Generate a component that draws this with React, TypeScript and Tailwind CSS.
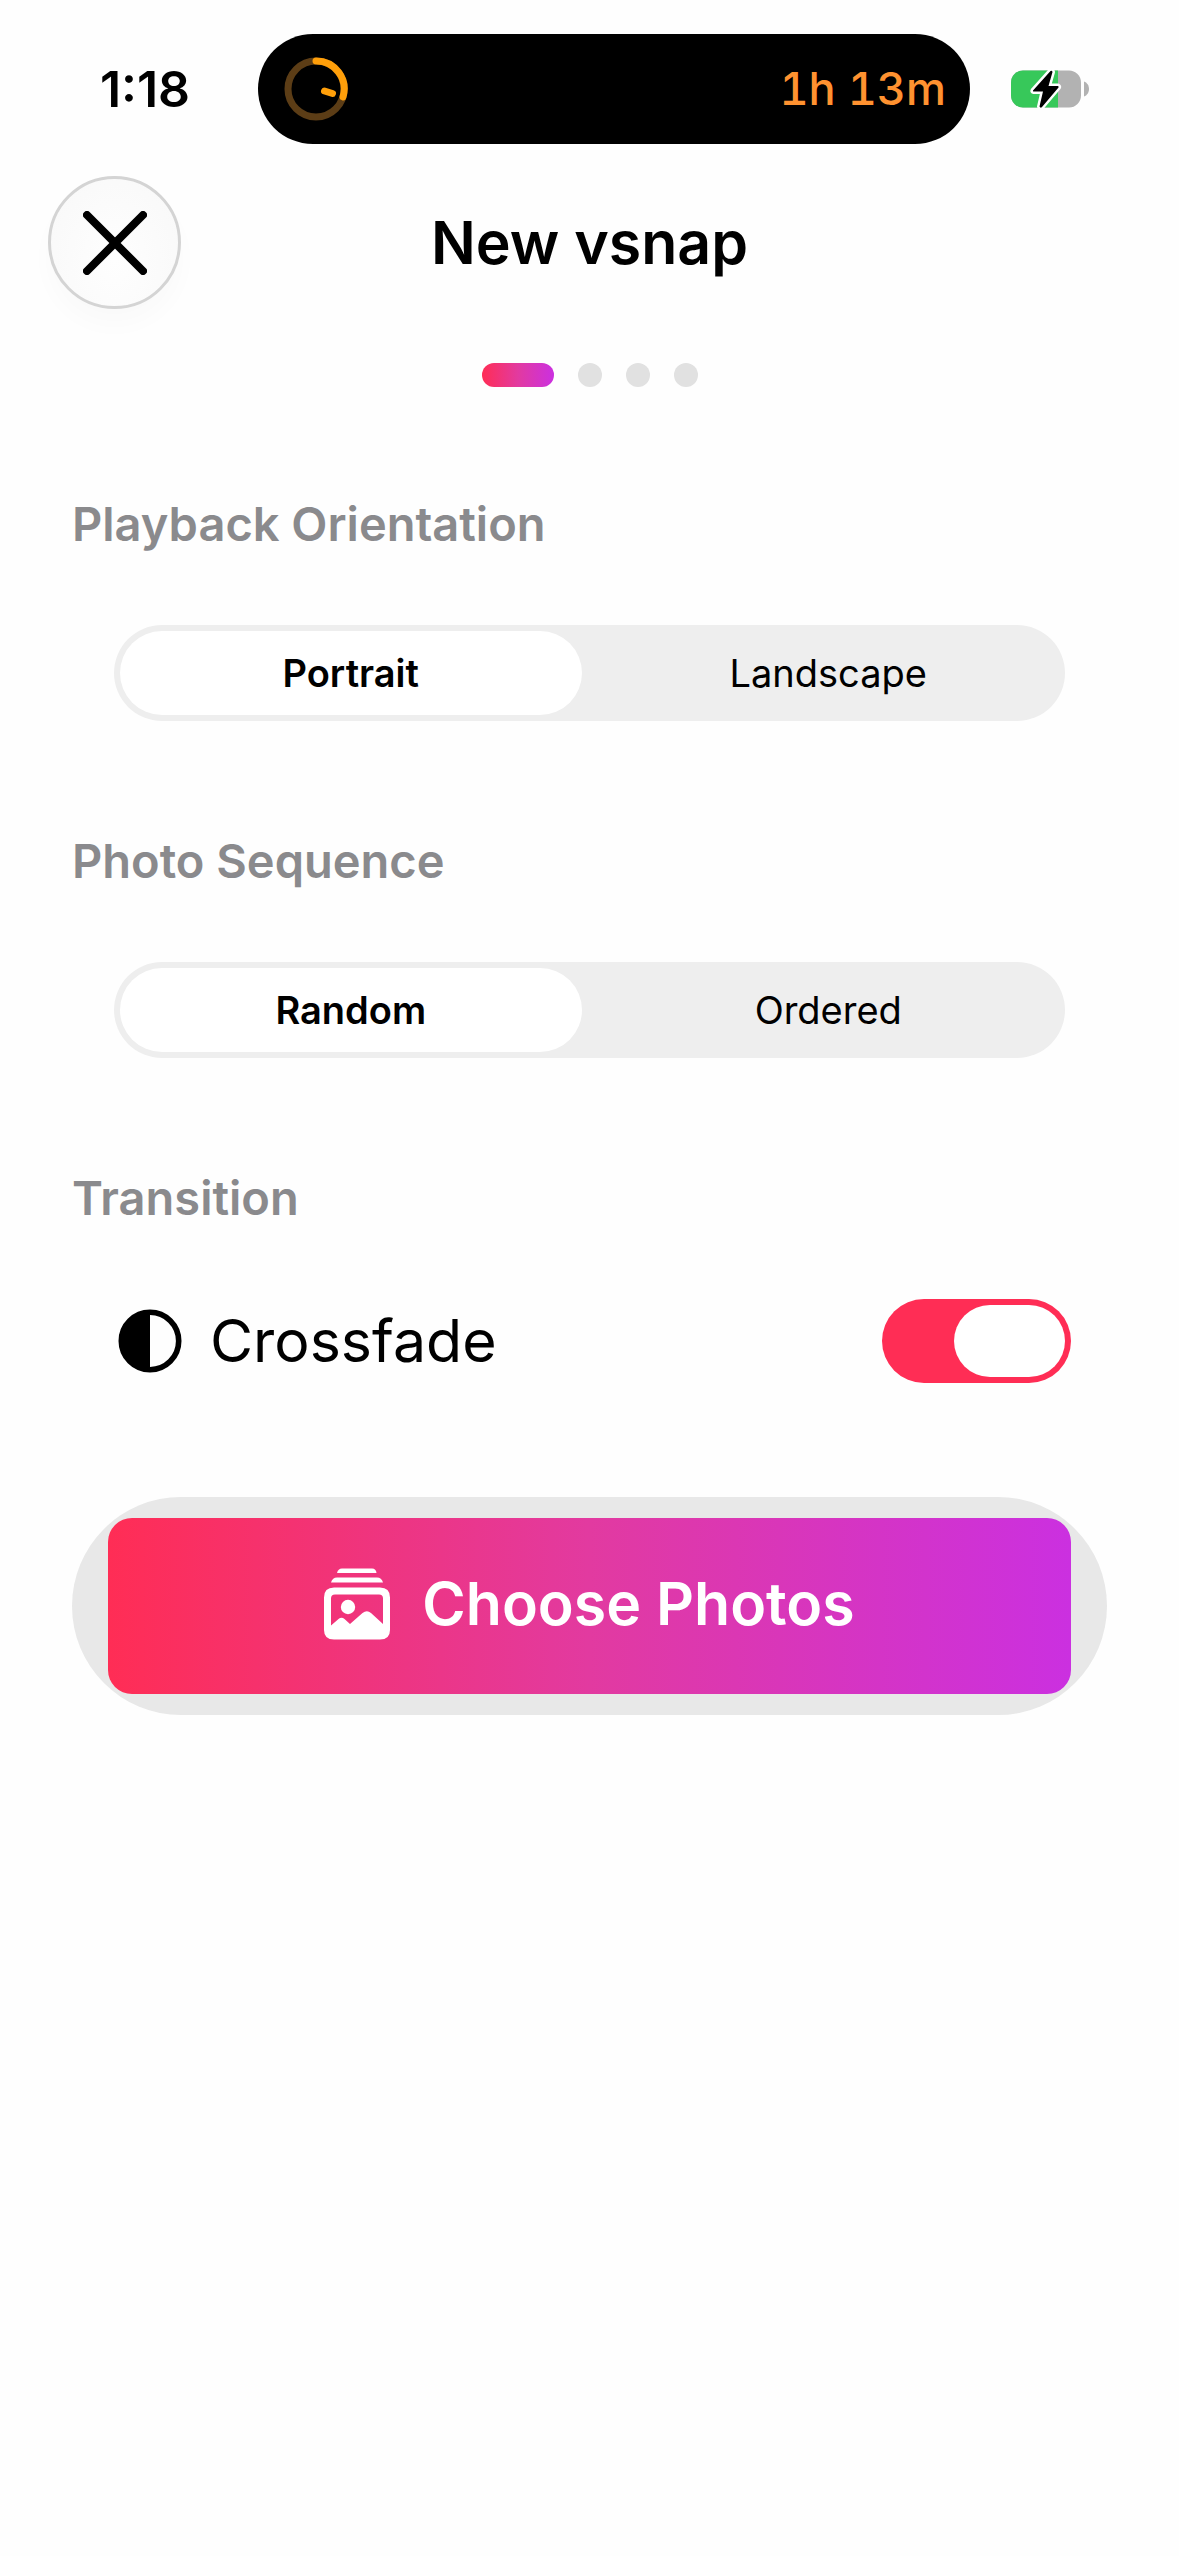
import { useState } from 'react';
import { clsx } from 'clsx';

type SegmentedProps = {
  name: string;
  label: string;
  options: string[];
  value: string;
  onChange: (value: string) => void;
};

const TimerRing = () => (
  <svg viewBox="0 0 64 64" className="size-16" fill="none" aria-hidden="true">
    <circle cx="32" cy="32" r="28" stroke="#5c3d16" strokeWidth="7" />
    <path d="M32 4A28 28 0 0 1 59 40" stroke="#ff9f0a" strokeWidth="7" strokeLinecap="round" />
    <path d="M40.500 34L48.500 36.500" stroke="#ff9f0a" strokeWidth="7" strokeLinecap="round" />
  </svg>
);

const Battery = () => (
  <svg viewBox="0 0 80 40" className="h-10 w-20" aria-hidden="true">
    <defs>
      <clipPath id="battery-body">
        <rect x="1" y="1.500" width="70" height="37" rx="12" />
      </clipPath>
    </defs>
    <g clipPath="url(#battery-body)">
      <rect width="80" height="40" fill="#b2b2b2" />
      <rect width="48" height="40" fill="#37c85a" />
    </g>
    <path d="M74 12.500C77 13.500 79 16.500 79 20C79 23.500 77 26.500 74 27.500Z" fill="#b2b2b2" />
    <path
      d="M40.500 2L23 21.500Q22.500 22.500 23.500 22.500H33L29.500 37.500Q30.500 39.500 32 38L48.500 18.500Q49 17.500 48 17H38.500L42.500 3Q42 1 40.500 2Z"
      fill="#000"
      stroke="#fff"
      strokeWidth="5"
      strokeLinejoin="round"
      paintOrder="stroke"
    />
  </svg>
);

const PhotoStack = () => (
  <svg viewBox="0 0 66 72" className="h-18 w-[66px]" fill="#fff" aria-hidden="true">
    <path d="M13 5Q14 0.500 18 0.500H48Q52 0.500 52.500 5Z" />
    <path d="M7 14.500Q8.500 9.500 13 9.500H53Q57.500 9.500 59 14.500Z" />
    <path
      fillRule="evenodd"
      d="M10 19.500H56Q66 19.500 66 29.500V62Q66 71.500 56 71.500H10Q0 71.500 0 62V29.500Q0 19.500 10 19.500ZM11 26.500Q7 26.500 7 30.500V57.500L14.500 51Q17.500 48.500 20.500 51L26 56L38.500 45Q43 41.500 47 45L59 56V30.500Q59 26.500 55 26.500Z"
    />
    <circle cx="24" cy="39" r="7.200" />
  </svg>
);

const HalfCircle = () => (
  <svg viewBox="0 0 64 64" className="size-16" aria-hidden="true">
    <circle cx="32" cy="32" r="28.700" fill="none" stroke="#000" strokeWidth="5.600" />
    <path d="M32 2A30 30 0 0 0 32 62Z" />
  </svg>
);

const Segmented = ({ name, label, options, value, onChange }: SegmentedProps) => (
  <div role="radiogroup" aria-label={label} className="px-[42px]">
    <div className="grid h-24 grid-cols-2 gap-4 rounded-full bg-[#eeeeee] p-1.5">
      {options.map((option) => (
        <label
          key={option}
          className={clsx(
            'flex cursor-pointer items-center justify-center rounded-full text-[38px] leading-[48px]',
            value === option ? 'bg-white font-semibold' : 'font-normal'
          )}
        >
          <input
            type="radio"
            name={name}
            value={option}
            checked={value === option}
            onChange={() => onChange(option)}
            className="sr-only"
          />
          {option}
        </label>
      ))}
    </div>
  </div>
);

const SectionTitle = ({ children }: { children: string }) => (
  <h2 className="mb-[71px] text-[47px] leading-[60px] font-semibold text-[#8a8a8d]">{children}</h2>
);

const App = () => {
  const [orientation, setOrientation] = useState('Portrait');
  const [sequence, setSequence] = useState('Random');
  const [crossfade, setCrossfade] = useState(true);

  return (
    <div className="min-h-screen bg-[#fefefe] font-['Inter',sans-serif] text-black">
      {/* Status bar */}
      <div className="grid grid-cols-[258fr_712fr_209fr] items-center pt-[34px]">
        <div className="pl-8 text-center text-[50px] leading-[60px] font-semibold">1:18</div>
        <div className="flex h-[110px] items-center justify-between rounded-full bg-black pr-6 pl-[26px]">
          <TimerRing />
          <span className="text-[45px] leading-[60px] font-medium text-[#ff9230] tabular-nums">1h 13m</span>
        </div>
        <div className="pl-10">
          <Battery />
        </div>
      </div>

      {/* Header */}
      <header className="mt-8 grid grid-cols-[1fr_auto_1fr] items-center px-12">
        <button
          type="button"
          aria-label="Close"
          className="flex size-[133px] items-center justify-center rounded-full border-3 border-[#d4d4d4] bg-radial-[at_50%_65%] from-[#fefefe] to-[#f8f8f8] shadow-[0_16px_24px_rgba(0,0,0,0.02)]"
        >
          <svg viewBox="0 0 64 64" className="size-16" stroke="#000" strokeWidth="8" strokeLinecap="round" aria-hidden="true">
            <path d="M4 4L60 60M60 4L4 60" />
          </svg>
        </button>
        <h1 className="text-[59px] leading-[76px] font-semibold">New vsnap</h1>
      </header>

      {/* Step indicator */}
      <div className="mt-[54px] flex justify-center gap-6">
        <span className="h-6 w-18 rounded-full bg-linear-to-r/srgb from-[#ff2d55] via-[#e23aa0] to-[#cb30e0]" />
        <span className="size-6 rounded-full bg-[#e1e1e1]" />
        <span className="size-6 rounded-full bg-[#e1e1e1]" />
        <span className="size-6 rounded-full bg-[#e1e1e1]" />
      </div>

      <main className="mt-[107px] px-18">
        <section className="mb-[110px]">
          <SectionTitle>Playback Orientation</SectionTitle>
          <Segmented
            name="orientation"
            label="Playback Orientation"
            options={['Portrait', 'Landscape']}
            value={orientation}
            onChange={setOrientation}
          />
        </section>

        <section className="mb-[110px]">
          <SectionTitle>Photo Sequence</SectionTitle>
          <Segmented
            name="sequence"
            label="Photo Sequence"
            options={['Random', 'Ordered']}
            value={sequence}
            onChange={setSequence}
          />
        </section>

        <section className="mb-[114px]">
          <SectionTitle>Transition</SectionTitle>
          <label className="flex h-[84px] cursor-pointer items-center pr-9 pl-[46px]">
            <HalfCircle />
            <span className="ml-7 flex-1 text-[59px] leading-[76px]">Crossfade</span>
            <input
              type="checkbox"
              role="switch"
              checked={crossfade}
              onChange={(e) => setCrossfade(e.target.checked)}
              className="peer sr-only"
            />
            <span className="flex h-[84px] w-[189px] items-center rounded-full bg-[#e1e1e1] p-1.5 peer-checked:justify-end peer-checked:bg-[#ff2d55]">
              <span className="h-18 w-[111px] rounded-full bg-white" />
            </span>
          </label>
        </section>

        <button type="button" className="block w-full rounded-full bg-[#e8e8e8] px-9 py-[21px]">
          <span className="flex h-44 items-center justify-center gap-8 rounded-3xl bg-linear-to-r/srgb from-[#ff2d55] via-[#e23aa0] to-[#cb30e0] pb-1 text-[59px] leading-[76px] font-semibold text-white">
            <PhotoStack />
            Choose Photos
          </span>
        </button>
      </main>
    </div>
  );
};

export default App;
